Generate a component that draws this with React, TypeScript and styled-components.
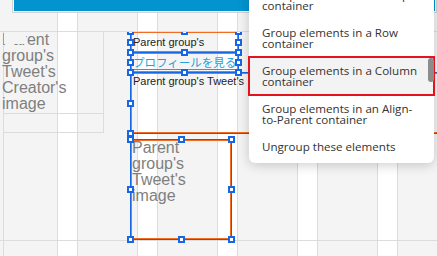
import { FC } from 'react';
import styled, { createGlobalStyle, css } from 'styled-components';

const ORANGE = '#f26b22';
const BLUE = '#1766e4';
const GRID = '#dcdcdc';

const GlobalStyle = createGlobalStyle`
  html, body {
    margin: 0;
    padding: 0;
  }
  body {
    background: #f4f4f4;
    font-family: "Liberation Sans", Arial, sans-serif;
  }
`;

const stripeLayer = `repeating-linear-gradient(
  to right,
  transparent 0 57px,
  ${GRID} 57px 58px,
  #fff 58px 77px,
  ${GRID} 77px 78px,
  transparent 78px 80px
)`;

const stripes = css`
  background-color: #f4f4f4;
  background-image: ${stripeLayer};
`;

const Screen = styled.div`
  position: relative;
  width: 437px;
  height: 256px;
  overflow: hidden;
  display: flex;
  flex-direction: column;
`;

const Header = styled.div`
  ${stripes};
  height: 31px;
  flex-shrink: 0;
  border-bottom: 1px solid ${GRID};
  display: flex;
  align-items: flex-start;
  padding-left: 12px;
`;

const BannerFrame = styled.div`
  width: 430px;
  border: 1px solid #d4d4d4;
  border-top: 0;
  padding: 0 1px 1px;
  background: #f8f8f8;
`;

const BannerBar = styled.div`
  height: 11px;
  background: #0394d0;
`;

// the editor canvas: grid stripes plus the page's left edge and one ruler line
const Canvas = styled.div`
  position: relative;
  flex: 1;
  overflow: hidden;
  background-color: #f4f4f4;
  background-image: linear-gradient(${GRID}, ${GRID}), linear-gradient(${GRID}, ${GRID}), ${stripeLayer};
  background-size: 1px 100%, 100% 1px, auto;
  background-position: 3px 0, 0 208px, 0 0;
  background-repeat: no-repeat, no-repeat, repeat;
`;

const ImageBox = styled.div`
  position: absolute;
  left: 3px;
  top: -2px;
  width: 101px;
  height: 103px;
  box-sizing: border-box;
  border: 1px solid ${GRID};
  border-top: 0;
  display: flex;
  flex-direction: column;
  justify-content: flex-end;
  padding-bottom: 18px;
`;

const BoxDivider = styled.div`
  height: 1px;
  background: ${GRID};
`;

const CreatorText = styled.div`
  position: absolute;
  left: 2px;
  top: 0;
  width: 98px;
  font-size: 16px;
  line-height: 16px;
  color: #7f7f7f;
`;

// something in the editor hides the start of the first word
const Occluder = styled.div`
  position: absolute;
  left: 4px;
  top: 1px;
  width: 22px;
  height: 11px;
  background: #f4f4f4;
`;

const Element = styled.div<{ $x: number; $y: number; $w: number; $h: number }>`
  position: absolute;
  left: ${({ $x }) => $x}px;
  top: ${({ $y }) => $y}px;
  width: ${({ $w }) => $w}px;
  height: ${({ $h }) => $h}px;
  box-sizing: border-box;
  border: 1px solid ${ORANGE};
  outline: 1px solid ${BLUE};
`;

const Label = styled.div<{ $center?: boolean }>`
  height: 100%;
  display: flex;
  align-items: ${({ $center }) => ($center ? 'center' : 'flex-start')};
  padding: ${({ $center }) => ($center ? '0' : '1px')} 0 0 1px;
  box-sizing: border-box;
  font-size: 11px;
  line-height: 13px;
  color: #222;
  white-space: nowrap;
`;

const ProfileLink = styled.a`
  display: block;
  padding: 1px 0 0 1px;
  font-family: "Noto Sans CJK JP", sans-serif;
  font-size: 11.5px;
  line-height: 14px;
  color: #27a0da;
  text-decoration: underline;
  text-underline-offset: 2px;
  white-space: nowrap;
`;

const ImageLabel = styled.div`
  margin-top: -1px;
  font-size: 16px;
  line-height: 16px;
  color: #7f7f7f;
`;

const Handle = styled.span<{ $h: 'l' | 'c' | 'r'; $v: 't' | 'm' | 'b' }>`
  position: absolute;
  width: 7px;
  height: 7px;
  box-sizing: border-box;
  background: #fff;
  border: 2px solid ${BLUE};
  z-index: 2;
  ${({ $h }) =>
    $h === 'l' ? 'left: -5px;' : $h === 'r' ? 'right: -5px;' : 'left: calc(50% - 3.5px);'}
  ${({ $v }) =>
    $v === 't' ? 'top: -5px;' : $v === 'b' ? 'bottom: -5px;' : 'top: calc(50% - 3.5px);'}
`;

const handleSpots: Array<['l' | 'c' | 'r', 't' | 'm' | 'b']> = [
  ['l', 't'],
  ['c', 't'],
  ['r', 't'],
  ['l', 'm'],
  ['r', 'm'],
  ['l', 'b'],
  ['c', 'b'],
  ['r', 'b'],
];

const Handles: FC = () => (
  <>
    {handleSpots.map(([h, v]) => (
      <Handle key={h + v} $h={h} $v={v} />
    ))}
  </>
);

const Menu = styled.div`
  position: absolute;
  left: 249px;
  top: -23px;
  width: 185px;
  padding: 3.5px 0;
  display: flex;
  flex-direction: column;
  background: #fff;
  border-radius: 6px;
  box-shadow: 0 2px 12px rgba(0, 0, 0, 0.2);
  z-index: 10;
`;

const MenuItem = styled.div<{ $active?: boolean }>`
  padding: 8px 13px;
  font-family: "Open Sans", sans-serif;
  font-size: 11.6px;
  line-height: 11px;
  color: #333;
  white-space: nowrap;
  background: ${({ $active }) => ($active ? '#f3f3f3' : 'transparent')};
  outline: ${({ $active }) => ($active ? '2px solid #e3141d' : 'none')};
  outline-offset: -1px;
`;

const ScrollThumb = styled.div`
  position: absolute;
  right: 0;
  top: 81px;
  width: 6px;
  height: 24px;
  border-radius: 3px;
  background: #8c8c8c;
  z-index: 1;
`;

const menuItems = [
  ['Group elements in a Group', 'container'],
  ['Group elements in a Row', 'container'],
  ['Group elements in a Column', 'container'],
  ['Group elements in an Align-', 'to-Parent container'],
  ['Ungroup these elements'],
];

const App: FC = () => (
  <Screen>
    <GlobalStyle />
    <Header>
      <BannerFrame>
        <BannerBar />
      </BannerFrame>
    </Header>
    <Canvas>
      <ImageBox>
        <BoxDivider />
      </ImageBox>
      <CreatorText>Parent group's Tweet's Creator's image</CreatorText>
      <Occluder />

      <Element $x={131} $y={0} $w={107} $h={20}>
        <Label $center>Parent group's</Label>
        <Handles />
      </Element>
      <Element $x={131} $y={21} $w={107} $h={19}>
        <ProfileLink>プロフィールを見る</ProfileLink>
        <Handles />
      </Element>
      <Element $x={131} $y={41} $w={310} $h={60}>
        <Label>Parent group's Tweet's</Label>
        <Handles />
      </Element>
      <Element $x={131} $y={108} $w={100} $h={99}>
        <ImageLabel>Parent group's Tweet's image</ImageLabel>
        <Handles />
      </Element>
    </Canvas>
    <Menu>
      <ScrollThumb />
      {menuItems.map((lines, i) => (
        <MenuItem key={lines[0]} $active={i === 2}>
          {lines.map((line, j) => (
            <div key={j}>{line}</div>
          ))}
        </MenuItem>
      ))}
    </Menu>
  </Screen>
);

export default App;
